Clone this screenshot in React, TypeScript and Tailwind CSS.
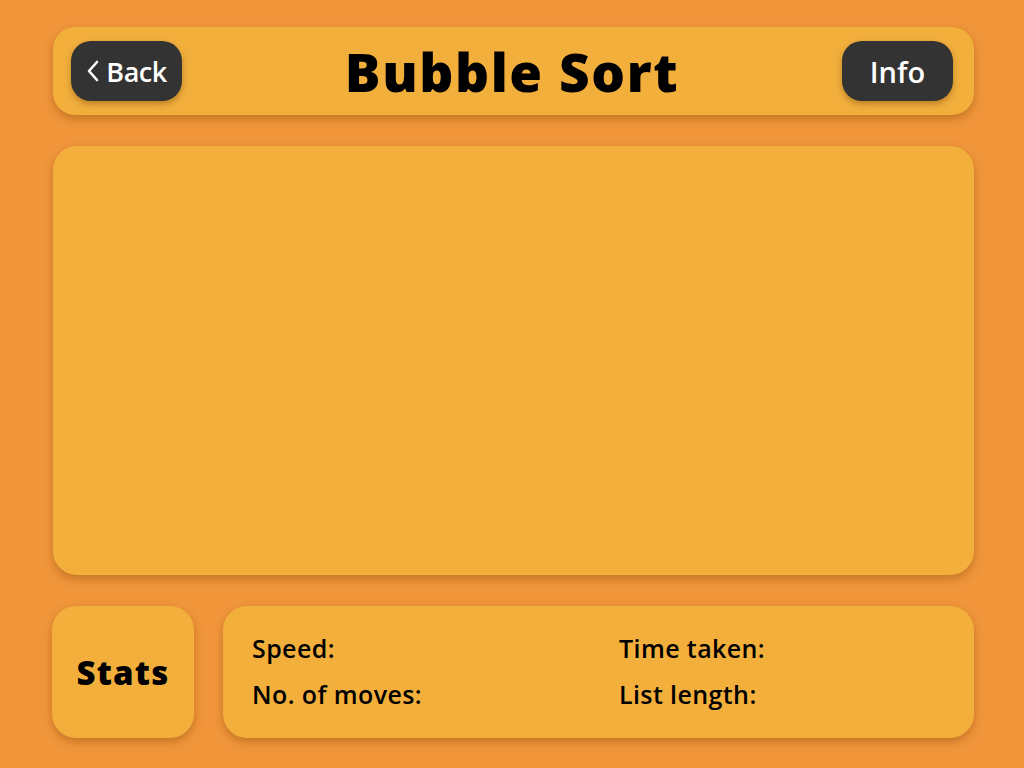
import React from 'react';

const font = { fontFamily: '"Open Sans", "Lato", sans-serif' };

export default function App() {
  return (
    <div
      className="h-screen w-full bg-[#f0953a] flex flex-col pt-[27px] pb-[30px] pl-[53px] pr-[50px] gap-[31px]"
      style={font}
    >
      {/* header */}
      <div className="h-[88px] shrink-0 rounded-[22px] bg-[#f2af3c] shadow-[0_4px_8px_rgba(120,60,0,0.35)] flex items-center justify-between pl-[18px] pr-[21px]">
        <button className="w-[111px] h-[60px] rounded-[20px] bg-[#333333] text-white flex items-center justify-center gap-[6px] shadow-[0_3px_6px_rgba(80,40,0,0.35)]">
          <svg width="14" height="24" viewBox="0 0 14 24" fill="none" stroke="white" strokeWidth="2.6" strokeLinecap="round" strokeLinejoin="round">
            <path d="M11 3 L3 12 L11 21" />
          </svg>
          <span className="text-[27px] font-semibold leading-none tracking-[-0.5px]">Back</span>
        </button>
        <h1 className="text-[53px] font-extrabold leading-none text-black tracking-[1.6px]">Bubble Sort</h1>
        <button className="w-[111px] h-[60px] rounded-[20px] bg-[#333333] text-white flex items-center justify-center shadow-[0_3px_6px_rgba(80,40,0,0.35)]">
          <span className="text-[29px] font-semibold leading-none">Info</span>
        </button>
      </div>

      {/* visualisation area */}
      <div className="flex-1 rounded-[24px] bg-[#f2af3c] shadow-[0_4px_8px_rgba(120,60,0,0.35)]" />

      {/* stats */}
      <div className="h-[132px] shrink-0 flex gap-[29px]">
        <div className="w-[142px] -ml-px rounded-[24px] bg-[#f2af3c] shadow-[0_4px_8px_rgba(120,60,0,0.35)] flex items-center justify-center">
          <span className="text-[33px] font-extrabold text-black leading-none tracking-[1.2px]">Stats</span>
        </div>
        <div className="flex-1 rounded-[24px] bg-[#f2af3c] shadow-[0_4px_8px_rgba(120,60,0,0.35)] pl-[29px] pt-[27px] grid grid-cols-[367px_1fr] auto-rows-[46px] text-[25px] font-semibold text-black leading-none content-start tracking-[0.4px]">
          <div className="pt-[3px]">Speed:</div>
          <div className="pt-[3px]">Time taken:</div>
          <div className="pt-[3px]">No. of moves:</div>
          <div className="pt-[3px]">List length:</div>
        </div>
      </div>
    </div>
  );
}
